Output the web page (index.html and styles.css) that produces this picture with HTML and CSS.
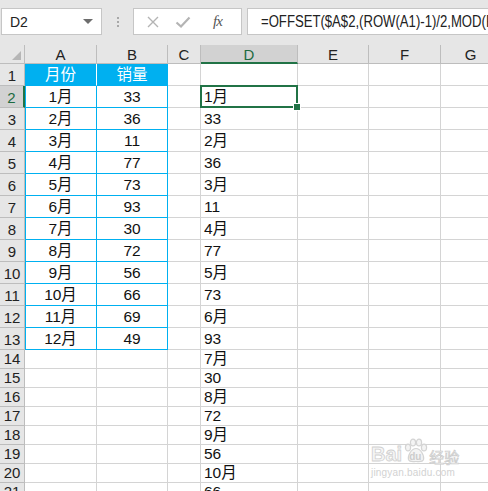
FILE: index.html
```html
<!DOCTYPE html>
<html>
<head>
<meta charset="utf-8">
<link rel="stylesheet" href="styles.css">
</head>
<body>
<div class="app">
  <div class="toolbar">
    <div class="namebox"><span>D2</span><span class="caret"></span></div>
    <div class="dots"><i></i><i></i><i></i></div>
    <div class="btns">
      <svg class="x" width="14" height="14" viewBox="0 0 14 14"><path d="M2 2L12 12M12 2L2 12" stroke="#b4b4b4" stroke-width="1.4" fill="none"/></svg>
      <svg class="ok" width="16" height="14" viewBox="0 0 16 14"><path d="M1.5 7.5L6 11.5L14.5 2.5" stroke="#b4b4b4" stroke-width="2.2" fill="none"/></svg>
      <span class="fx">fx</span>
    </div>
    <div class="formula"><span class="ftext">=OFFSET($A$2,(ROW(A1)-1)/2,MOD(ROW(A1)-1,2))</span></div>
  </div>
  <div class="sheet">
    <div class="row hdr">
      <div class="rh corner"><span class="tri"></span></div>
      <div class="c a">A</div><div class="c b">B</div><div class="c cc">C</div><div class="c d sel">D</div><div class="c e">E</div><div class="c f">F</div><div class="c g">G</div>
    </div>
    <div class="row tall">
      <div class="rh">1</div>
      <div class="c a th">月份</div><div class="c b th">销量</div><div class="c cc"></div><div class="c d"></div><div class="c e"></div><div class="c f"></div><div class="c g"></div>
    </div>
    <div class="row tall">
      <div class="rh selrow">2</div>
      <div class="c a td">1月</div><div class="c b td">33</div><div class="c cc"></div><div class="c d active">1月</div><div class="c e"></div><div class="c f"></div><div class="c g"></div>
    </div>
    <div class="row tall"><div class="rh">3</div><div class="c a td">2月</div><div class="c b td">36</div><div class="c cc"></div><div class="c d">33</div><div class="c e"></div><div class="c f"></div><div class="c g"></div></div>
    <div class="row tall"><div class="rh">4</div><div class="c a td">3月</div><div class="c b td">11</div><div class="c cc"></div><div class="c d">2月</div><div class="c e"></div><div class="c f"></div><div class="c g"></div></div>
    <div class="row tall"><div class="rh">5</div><div class="c a td">4月</div><div class="c b td">77</div><div class="c cc"></div><div class="c d">36</div><div class="c e"></div><div class="c f"></div><div class="c g"></div></div>
    <div class="row tall"><div class="rh">6</div><div class="c a td">5月</div><div class="c b td">73</div><div class="c cc"></div><div class="c d">3月</div><div class="c e"></div><div class="c f"></div><div class="c g"></div></div>
    <div class="row tall"><div class="rh">7</div><div class="c a td">6月</div><div class="c b td">93</div><div class="c cc"></div><div class="c d">11</div><div class="c e"></div><div class="c f"></div><div class="c g"></div></div>
    <div class="row tall"><div class="rh">8</div><div class="c a td">7月</div><div class="c b td">30</div><div class="c cc"></div><div class="c d">4月</div><div class="c e"></div><div class="c f"></div><div class="c g"></div></div>
    <div class="row tall"><div class="rh">9</div><div class="c a td">8月</div><div class="c b td">72</div><div class="c cc"></div><div class="c d">77</div><div class="c e"></div><div class="c f"></div><div class="c g"></div></div>
    <div class="row tall"><div class="rh">10</div><div class="c a td">9月</div><div class="c b td">56</div><div class="c cc"></div><div class="c d">5月</div><div class="c e"></div><div class="c f"></div><div class="c g"></div></div>
    <div class="row tall"><div class="rh">11</div><div class="c a td">10月</div><div class="c b td">66</div><div class="c cc"></div><div class="c d">73</div><div class="c e"></div><div class="c f"></div><div class="c g"></div></div>
    <div class="row tall"><div class="rh">12</div><div class="c a td">11月</div><div class="c b td">69</div><div class="c cc"></div><div class="c d">6月</div><div class="c e"></div><div class="c f"></div><div class="c g"></div></div>
    <div class="row tall"><div class="rh">13</div><div class="c a td">12月</div><div class="c b td">49</div><div class="c cc"></div><div class="c d">93</div><div class="c e"></div><div class="c f"></div><div class="c g"></div></div>
    <div class="row"><div class="rh">14</div><div class="c a"></div><div class="c b"></div><div class="c cc"></div><div class="c d">7月</div><div class="c e"></div><div class="c f"></div><div class="c g"></div></div>
    <div class="row"><div class="rh">15</div><div class="c a"></div><div class="c b"></div><div class="c cc"></div><div class="c d">30</div><div class="c e"></div><div class="c f"></div><div class="c g"></div></div>
    <div class="row"><div class="rh">16</div><div class="c a"></div><div class="c b"></div><div class="c cc"></div><div class="c d">8月</div><div class="c e"></div><div class="c f"></div><div class="c g"></div></div>
    <div class="row"><div class="rh">17</div><div class="c a"></div><div class="c b"></div><div class="c cc"></div><div class="c d">72</div><div class="c e"></div><div class="c f"></div><div class="c g"></div></div>
    <div class="row"><div class="rh">18</div><div class="c a"></div><div class="c b"></div><div class="c cc"></div><div class="c d">9月</div><div class="c e"></div><div class="c f"></div><div class="c g"></div></div>
    <div class="row"><div class="rh">19</div><div class="c a"></div><div class="c b"></div><div class="c cc"></div><div class="c d">56</div><div class="c e"></div><div class="c f"></div><div class="c g"></div></div>
    <div class="row"><div class="rh">20</div><div class="c a"></div><div class="c b"></div><div class="c cc"></div><div class="c d">10月</div><div class="c e"></div><div class="c f"></div><div class="c g"></div></div>
    <div class="row"><div class="rh">21</div><div class="c a"></div><div class="c b"></div><div class="c cc"></div><div class="c d">66</div><div class="c e"></div><div class="c f"></div><div class="c g"></div></div>
    <div class="watermark">
      <div class="wm-top">
        <span class="bai">Bai</span>
        <span class="paw"><svg width="26" height="26" viewBox="0 0 26 26"><g fill="#f4f4f4" stroke="#d4d4d4" stroke-width="1.2"><ellipse cx="5" cy="9.5" rx="2.6" ry="3.3"/><ellipse cx="10" cy="4.5" rx="2.6" ry="3.3"/><ellipse cx="16" cy="4.5" rx="2.6" ry="3.3"/><ellipse cx="21" cy="9.5" rx="2.6" ry="3.3"/><path d="M13 10.5c-4.5 0-8.5 7-7.5 11 1 3 5 2 7.5 2s6.5 1 7.5-2c1-4-3-11-7.5-11z"/></g></svg><span class="du">du</span></span>
        <span class="jy">经验</span>
      </div>
      <div class="wm-url">jingyan.baidu.com</div>
    </div>
  </div>
</div>
</body>
</html>
```
FILE: styles.css
```css
html, body { margin: 0; padding: 0; }
body {
  width: 488px;
  height: 491px;
  overflow: hidden;
  background: #fff;
  font-family: "Liberation Sans", "Noto Sans CJK SC", sans-serif;
  color: #111;
}
.app { width: 488px; height: 491px; overflow: hidden; }

.toolbar {
  height: 45px;
  background: #e6e6e6;
  display: flex;
  align-items: flex-start;
  padding-top: 8px;
  box-sizing: border-box;
  white-space: nowrap;
}
.namebox {
  margin-left: 1px;
  width: 101px;
  height: 27px;
  box-sizing: border-box;
  background: #fff;
  border: 1px solid #c6c6c6;
  display: flex;
  align-items: center;
  justify-content: space-between;
  padding: 0 8px 0 8px;
  font-size: 14px;
  color: #222;
}
.caret {
  width: 0; height: 0;
  border-left: 5px solid transparent;
  border-right: 5px solid transparent;
  border-top: 5px solid #6d6d6d;
}
.dots {
  width: 31px;
  height: 27px;
  display: flex;
  flex-direction: column;
  align-items: center;
  justify-content: center;
  gap: 2px;
}
.dots i { display: block; width: 2px; height: 2px; background: #a8a8a8; }
.btns {
  width: 109px;
  height: 27px;
  box-sizing: border-box;
  background: #fff;
  border: 1px solid #c6c6c6;
  display: flex;
  align-items: center;
  padding-left: 12px;
}
.btns .x { margin-right: 15px; }
.btns .ok { margin-right: 22px; }
.fx {
  font-family: "Liberation Serif", serif;
  font-style: italic;
  font-size: 15px;
  color: #555;
  letter-spacing: -1px;
}
.formula {
  margin-left: 5px;
  flex: 1;
  height: 27px;
  box-sizing: border-box;
  background: #fff;
  border: 1px solid #c6c6c6;
  border-right: none;
  padding-left: 13px;
  font-size: 16px;
  line-height: 25px;
  color: #222;
  overflow: hidden;
}
.ftext {
  display: inline-block;
  transform: scaleX(0.82);
  transform-origin: left center;
}

.sheet { position: relative; }
.row { display: flex; height: 19px; }
.row.tall { height: 22px; }
.row.hdr { height: 19px; }

.rh, .c {
  box-sizing: border-box;
  height: 100%;
  flex: none;
  border-right: 1px solid #d4d4d4;
  border-bottom: 1px solid #d4d4d4;
  font-size: 15.5px;
  line-height: 1;
  display: flex;
  align-items: flex-end;
  padding-bottom: 2px;
  overflow: hidden;
  white-space: nowrap;
}
.row.tall .c { align-items: center; padding-bottom: 0; }
.rh {
  width: 25px;
  background: #e6e6e6;
  border-right: 1px solid #bdbdbd;
  border-bottom: 1px solid #bdbdbd;
  justify-content: center;
  color: #222;
  font-size: 15px;
}
.a { width: 72px; }
.b { width: 71px; }
.cc { width: 33px; }
.d { width: 97px; padding-left: 3px; }
.e { width: 71px; }
.f { width: 72px; }
.g { width: 60px; border-right: none; }

.hdr .c {
  background: #e6e6e6;
  border-right: 1px solid #bdbdbd;
  border-bottom: 1px solid #bdbdbd;
  justify-content: center;
  padding-left: 0;
  padding-bottom: 1px;
  color: #222;
  font-size: 15px;
}
.hdr .c.sel {
  background: #d2d2d2;
  border-bottom: 2px solid #217346;
  color: #1d6b41;
  padding-bottom: 0;
}
.corner { position: relative; }
.tri {
  position: absolute;
  right: 3px;
  bottom: 3px;
  width: 0; height: 0;
  border-left: 9px solid transparent;
  border-bottom: 9px solid #b6b6b6;
}
.rh.selrow {
  background: #d2d2d2;
  border-right: 2px solid #217346;
  color: #1d6b41;
}

.row .c.th {
  background: #00b0f0;
  color: #fff;
  justify-content: center;
  border-bottom: 1px solid #00b0f0;
}
.row .c.th.a { border-right: 1px solid #fff; }
.row .c.th.b { border-right: 1px solid #00b0f0; }
.row .c.td {
  justify-content: center;
  border-right: 1px solid #00b0f0;
  border-bottom: 1px solid #00b0f0;
}
.row .c.td.a { box-shadow: inset 1px 0 0 #00b0f0; }

.active { position: relative; overflow: visible; }
.active::after {
  content: "";
  position: absolute;
  left: -1px;
  top: -1px;
  right: -1px;
  bottom: -1px;
  border: 2px solid #217346;
}
.active::before {
  content: "";
  position: absolute;
  right: -4px;
  bottom: -4px;
  width: 6px;
  height: 6px;
  background: #217346;
  border: 1px solid #fff;
  z-index: 2;
}

.watermark {
  position: absolute;
  left: 371px;
  top: 392px;
  width: 92px;
}
.wm-top {
  display: flex;
  align-items: flex-end;
  height: 27px;
}
.bai {
  font-size: 20px;
  font-weight: bold;
  line-height: 1;
  color: #f6f6f6;
  -webkit-text-stroke: 0.8px #d0d0d0;
}
.paw { position: relative; width: 26px; height: 26px; margin-left: 1px; }
.paw svg { display: block; }
.paw .du {
  position: absolute;
  left: 6px;
  bottom: 2px;
  font-size: 10px;
  font-weight: bold;
  line-height: 1;
  color: #cccccc;
}
.jy {
  font-family: "Noto Sans CJK SC", sans-serif;
  font-size: 15px;
  line-height: 1;
  color: #f6f6f6;
  -webkit-text-stroke: 0.7px #cccccc;
}
.wm-url {
  font-size: 10px;
  line-height: 1;
  margin-top: 4px;
  color: #d2d2d2;
  letter-spacing: 0.2px;
}
```
